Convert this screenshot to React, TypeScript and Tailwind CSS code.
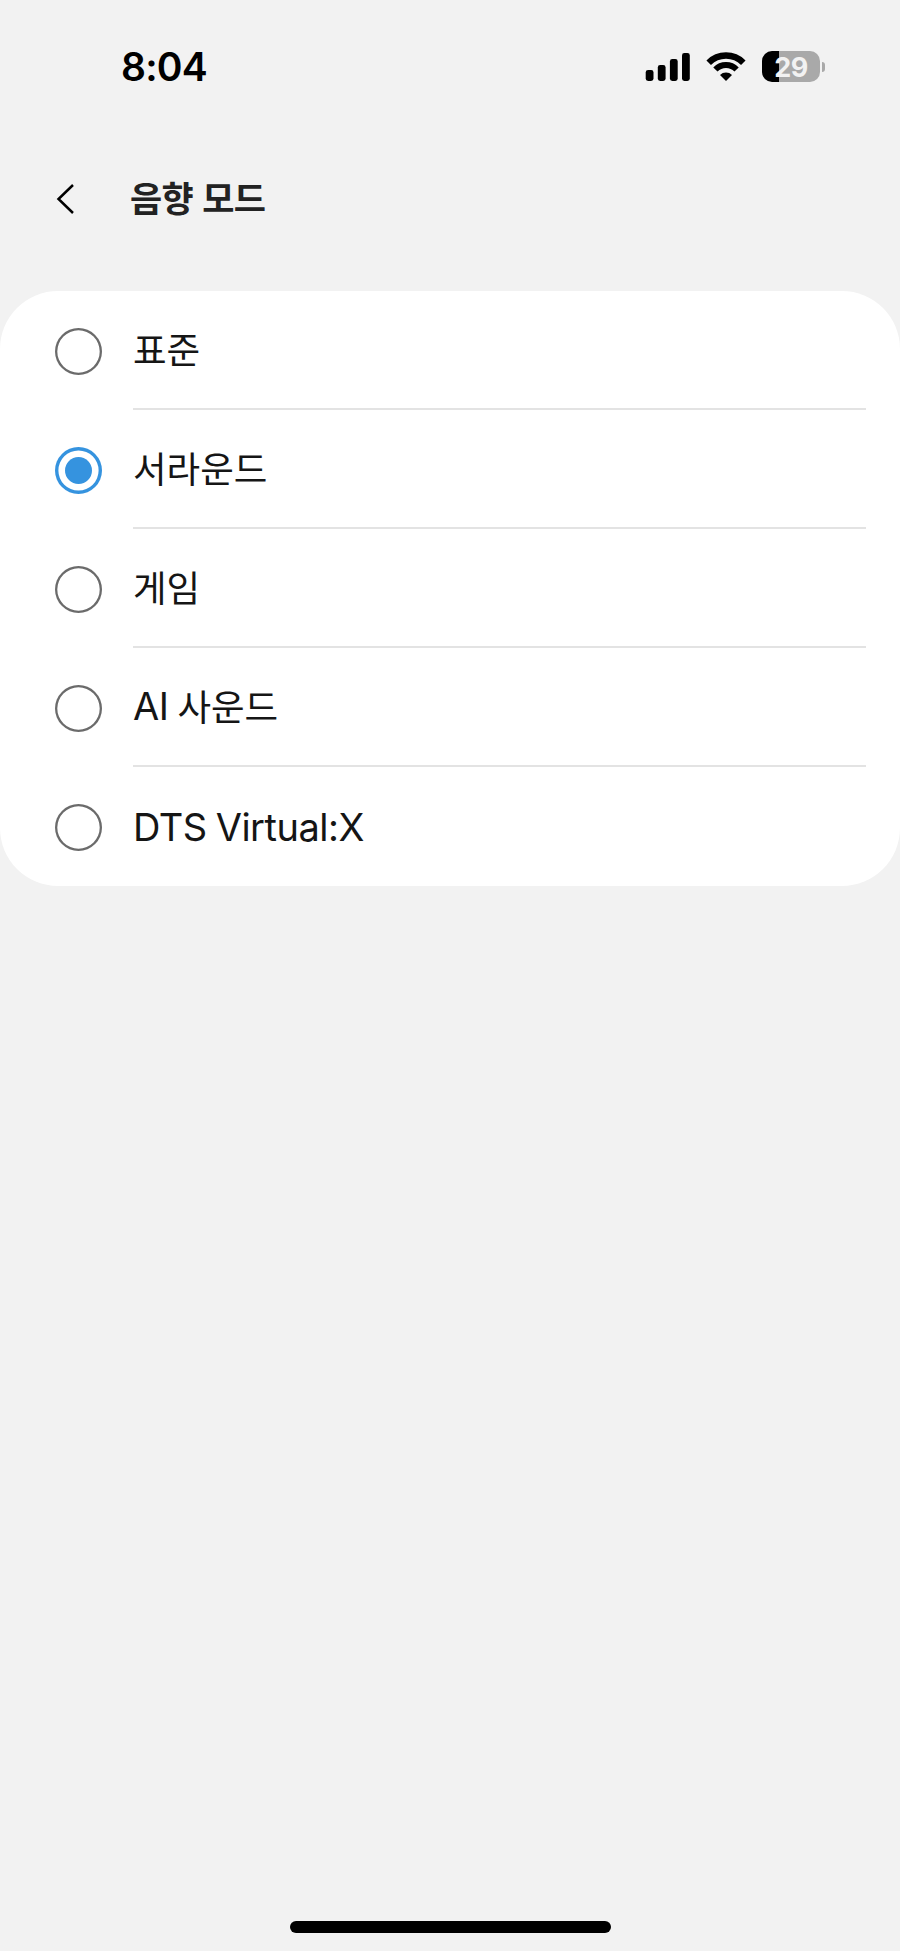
import React, { useState } from "react";

const modes = ["표준", "서라운드", "게임", "AI 사운드", "DTS Virtual:X"];

function StatusBar() {
  return (
    <div className="flex h-[134px] justify-between pl-[121px] pr-[75px]">
      <span className="pt-[43px] text-[39px] leading-[48px] font-semibold tracking-[-0.8px] text-black">
        8:04
      </span>
      <div className="flex items-start pt-[50px]">
        <svg width="46" height="32" viewBox="0 0 46 32" fill="#000">
          <rect x="0.7" y="20" width="7.8" height="11" rx="2.4" />
          <rect x="12.8" y="15" width="7.8" height="16" rx="2.4" />
          <rect x="24.9" y="9" width="7.8" height="22" rx="2.4" />
          <rect x="37" y="3" width="7.8" height="28" rx="2.4" />
        </svg>
        <svg
          className="ml-[15px]"
          width="40"
          height="32"
          viewBox="0 0 40 32"
          fill="none"
          stroke="#000"
        >
          <path d="M2.7 12.7 A24.5 24.5 0 0 1 37.3 12.7" strokeWidth="6.4" />
          <path d="M9.4 19.5 A15 15 0 0 1 30.6 19.5" strokeWidth="6" />
          <path
            d="M20 31 L14 25 A8.5 8.5 0 0 1 26 25 Z"
            fill="#000"
            stroke="none"
          />
        </svg>
        <div className="ml-[16px] flex items-center pt-[1px]">
          <div className="flex h-[31px] w-[58px] items-center justify-center rounded-[10px] bg-[linear-gradient(to_right,#000_17px,#a9a9a9_17px)] pt-[1px] text-[27px] leading-none font-bold tracking-[-0.5px] text-[#f2f2f2]">
            29
          </div>
          <div className="ml-[2px] h-[10px] w-[3px] rounded-r-full bg-[#a9a9a9]" />
        </div>
      </div>
    </div>
  );
}

function Radio({ checked }: { checked: boolean }) {
  return (
    <span
      className={`flex h-[47px] w-[47px] shrink-0 items-center justify-center rounded-full ${
        checked
          ? "shadow-[inset_0_0_0_3.4px_#3593df]"
          : "shadow-[inset_0_0_0_2.3px_#6b6b6b]"
      }`}
    >
      {checked && (
        <span className="h-[27px] w-[27px] rounded-full bg-[#3593df]" />
      )}
    </span>
  );
}

// latin words sit a little larger and tighter than the hangul ones
function Label({ text }: { text: string }) {
  return (
    <span className="flex gap-[9px] text-[#151515]">
      {text.split(" ").map((word) =>
        /^[A-Z]/.test(word) ? (
          <span
            key={word}
            className="pt-[1px] text-[38px] leading-[54px] tracking-[-0.5px]"
          >
            {word}
          </span>
        ) : (
          <span key={word} className="pt-[3px] text-[36.5px] leading-[54px]">
            {word}
          </span>
        )
      )}
    </span>
  );
}

export default function App() {
  const [selected, setSelected] = useState(1);

  return (
    <div className="flex h-[1951px] w-[900px] flex-col bg-[#f2f2f2] font-[Inter,'Noto_Sans_CJK_KR',sans-serif]">
      <StatusBar />

      <header className="flex h-[157px] items-start pl-[56px]">
        <button className="mt-[50px]" aria-label="뒤로">
          <svg
            width="20"
            height="32"
            viewBox="0 0 20 32"
            fill="none"
            stroke="#000"
            strokeWidth="2.5"
          >
            <path d="M17 1 L2.5 15 L17 29" />
          </svg>
        </button>
        <h1 className="mt-[40px] ml-[54px] text-[35px] leading-[50px] font-bold tracking-[-0.8px] text-[#222] [word-spacing:2px]">
          음향 모드
        </h1>
      </header>

      <main className="rounded-[58px] bg-white">
        {modes.map((mode, index) => (
          <div
            key={mode}
            onClick={() => setSelected(index)}
            className="flex h-[119px] pr-[34px] pl-[55px]"
          >
            <div className="flex items-center pt-[1px]">
              <Radio checked={selected === index} />
            </div>
            <div
              className={`ml-[31px] flex flex-1 items-center ${
                index < modes.length - 1 ? "border-b-2 border-[#e3e3e3]" : ""
              }`}
            >
              <Label text={mode} />
            </div>
          </div>
        ))}
      </main>

      <div className="mt-auto mb-[18px] h-[12px] w-[321px] self-center rounded-full bg-black" />
    </div>
  );
}
